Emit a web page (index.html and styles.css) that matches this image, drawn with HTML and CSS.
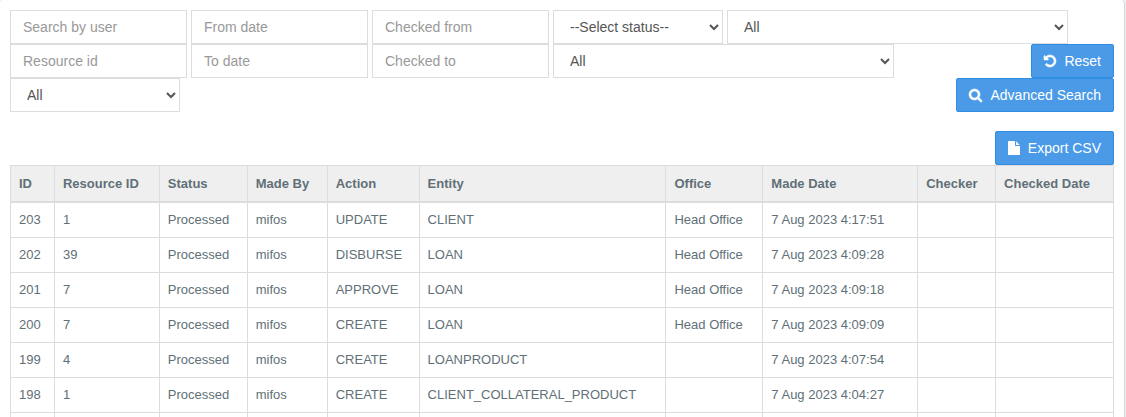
FILE: index.html
```html
<!DOCTYPE html>
<html lang="en">
<head>
<meta charset="utf-8">
<title>Audit Trails</title>
<link rel="stylesheet" href="styles.css">
</head>
<body>
<main class="panel">
  <form class="filters">
    <div class="filter-row">
      <input class="field" type="text" placeholder="Search by user" aria-label="Search by user">
      <input class="field" type="text" placeholder="From date" aria-label="From date">
      <input class="field" type="text" placeholder="Checked from" aria-label="Checked from">
      <select class="field field-short" aria-label="Status"><option>--Select status--</option></select>
      <select class="field field-wide" aria-label="Action"><option>All</option></select>
    </div>
    <div class="filter-row">
      <input class="field" type="text" placeholder="Resource id" aria-label="Resource id">
      <input class="field" type="text" placeholder="To date" aria-label="To date">
      <input class="field" type="text" placeholder="Checked to" aria-label="Checked to">
      <select class="field field-wide" aria-label="Entity"><option>All</option></select>
      <button class="btn" type="reset"><svg class="icon icon-bold" viewBox="128 0 1536 1792" aria-hidden="true"><path d="M1664 896q0 156-61 298t-164 245-245 164-298 61q-172 0-327-72.5t-264-204.5q-7-10-6.5-22.5t8.5-20.5l137-138q10-9 25-9 16 2 23 12 73 95 179 147t225 52q104 0 198.5-40.5t163.5-109.5 109.5-163.5 40.5-198.5-40.5-198.5-109.5-163.5-163.5-109.5-198.5-40.5q-98 0-188 35.5t-160 101.5l137 138q31 30 14 69-17 40-59 40h-448q-26 0-45-19t-19-45v-448q0-42 40-59 39-17 69 14l130 129q107-101 244.5-156.5t284.5-55.5q156 0 298 61t245 164 164 245 61 298z"/></svg>Reset</button>
    </div>
    <div class="filter-row">
      <select class="field field-short" aria-label="Processing result"><option>All</option></select>
      <button class="btn" type="button"><svg class="icon icon-bold" viewBox="64 0 1664 1792" aria-hidden="true"><path d="M1216 832q0-185-131.5-316.5t-316.5-131.5-316.5 131.5-131.5 316.5 131.5 316.5 316.5 131.5 316.5-131.5 131.5-316.5zm512 832q0 52-38 90t-90 38q-54 0-90-38l-343-342q-179 124-399 124-143 0-273.5-55.5t-225-150-150-225-55.5-273.5 55.5-273.5 150-225 225-150 273.5-55.5 273.5 55.5 225 150 150 225 55.5 273.5q0 220-124 399l343 343q37 37 37 90z"/></svg>Advanced Search</button>
    </div>
  </form>
  <div class="export-row">
    <button class="btn" type="button"><svg class="icon" viewBox="128 0 1536 1792" aria-hidden="true"><path d="M1152 512v-472q22 14 36 28l408 408q14 14 28 36h-472zm-128 32q0 40 28 68t68 28h544v1056q0 40-28 68t-68 28h-1344q-40 0-68-28t-28-68v-1600q0-40 28-68t68-28h800v544z"/></svg>Export CSV</button>
  </div>
  <table class="audits">
    <colgroup>
      <col class="c-id"><col class="c-resource"><col class="c-status"><col class="c-maker"><col class="c-action">
      <col class="c-entity"><col class="c-office"><col class="c-date"><col class="c-checker"><col class="c-checked">
    </colgroup>
    <thead>
      <tr><th>ID</th><th>Resource ID</th><th>Status</th><th>Made By</th><th>Action</th><th>Entity</th><th>Office</th><th>Made Date</th><th>Checker</th><th>Checked Date</th></tr>
    </thead>
    <tbody>
      <tr><td>203</td><td>1</td><td>Processed</td><td>mifos</td><td>UPDATE</td><td>CLIENT</td><td>Head Office</td><td>7 Aug 2023 4:17:51</td><td></td><td></td></tr>
      <tr><td>202</td><td>39</td><td>Processed</td><td>mifos</td><td>DISBURSE</td><td>LOAN</td><td>Head Office</td><td>7 Aug 2023 4:09:28</td><td></td><td></td></tr>
      <tr><td>201</td><td>7</td><td>Processed</td><td>mifos</td><td>APPROVE</td><td>LOAN</td><td>Head Office</td><td>7 Aug 2023 4:09:18</td><td></td><td></td></tr>
      <tr><td>200</td><td>7</td><td>Processed</td><td>mifos</td><td>CREATE</td><td>LOAN</td><td>Head Office</td><td>7 Aug 2023 4:09:09</td><td></td><td></td></tr>
      <tr><td>199</td><td>4</td><td>Processed</td><td>mifos</td><td>CREATE</td><td>LOANPRODUCT</td><td></td><td>7 Aug 2023 4:07:54</td><td></td><td></td></tr>
      <tr><td>198</td><td>1</td><td>Processed</td><td>mifos</td><td>CREATE</td><td>CLIENT_COLLATERAL_PRODUCT</td><td></td><td>7 Aug 2023 4:04:27</td><td></td><td></td></tr>
      <tr><td></td><td></td><td></td><td></td><td></td><td></td><td></td><td></td><td></td><td></td></tr>
    </tbody>
  </table>
</main>
</body>
</html>
```
FILE: styles.css
```css
* {
  box-sizing: border-box;
}

body {
  height: 100vh;
  margin: 0;
  overflow: hidden;
  background: #edf1f2;
  color: #616f77;
  font: 13px/18px "Liberation Sans", Arial, sans-serif;
}

.panel {
  height: 100%;
  margin-right: 1px;
  padding: 10px 10px 0;
  overflow: hidden;
  border-right: 1px solid #d3d8dd;
  border-radius: 4px 4px 0 0;
  background: #fff;
}

.filter-row {
  display: flex;
  gap: 4px;
}

.field {
  width: 177px;
  height: 34px;
  padding: 6px 12px;
  border: 1px solid #dcdedd;
  border-radius: 0;
  background-color: #fff;
  color: #555;
  font: 14px/20px "Liberation Sans", Arial, sans-serif;
}

.field::placeholder {
  color: #999;
}

.field-short {
  width: 170px;
}

.field-wide {
  width: 341px;
}

.btn {
  display: inline-flex;
  align-items: center;
  gap: 8px;
  height: 34px;
  margin-left: auto;
  padding: 6px 12px;
  border: 1px solid #2f8de4;
  border-radius: 2px;
  background: #4a9ae8;
  color: #fff;
  font: 14px/20px "Liberation Sans", Arial, sans-serif;
  white-space: nowrap;
}

.icon {
  height: 14px;
  fill: currentColor;
}

.icon-bold {
  overflow: visible;
  stroke: currentColor;
  stroke-width: 70;
}

.export-row {
  display: flex;
  margin-top: 19px;
}

.audits {
  width: 100%;
  border-collapse: collapse;
}

.audits th,
.audits td {
  height: 34px;
  padding: 8px;
  border: 1px solid #dcdcdc;
  text-align: left;
  white-space: nowrap;
}

.audits th {
  border-bottom-width: 2px;
  background: #efefef;
  line-height: 19px;
}

.c-id { width: 44px; }
.c-resource { width: 105px; }
.c-status { width: 88px; }
.c-maker { width: 80px; }
.c-action { width: 92px; }
.c-entity { width: 247px; }
.c-office { width: 97px; }
.c-date { width: 155px; }
.c-checker { width: 78px; }
.c-checked { width: 118px; }
```
